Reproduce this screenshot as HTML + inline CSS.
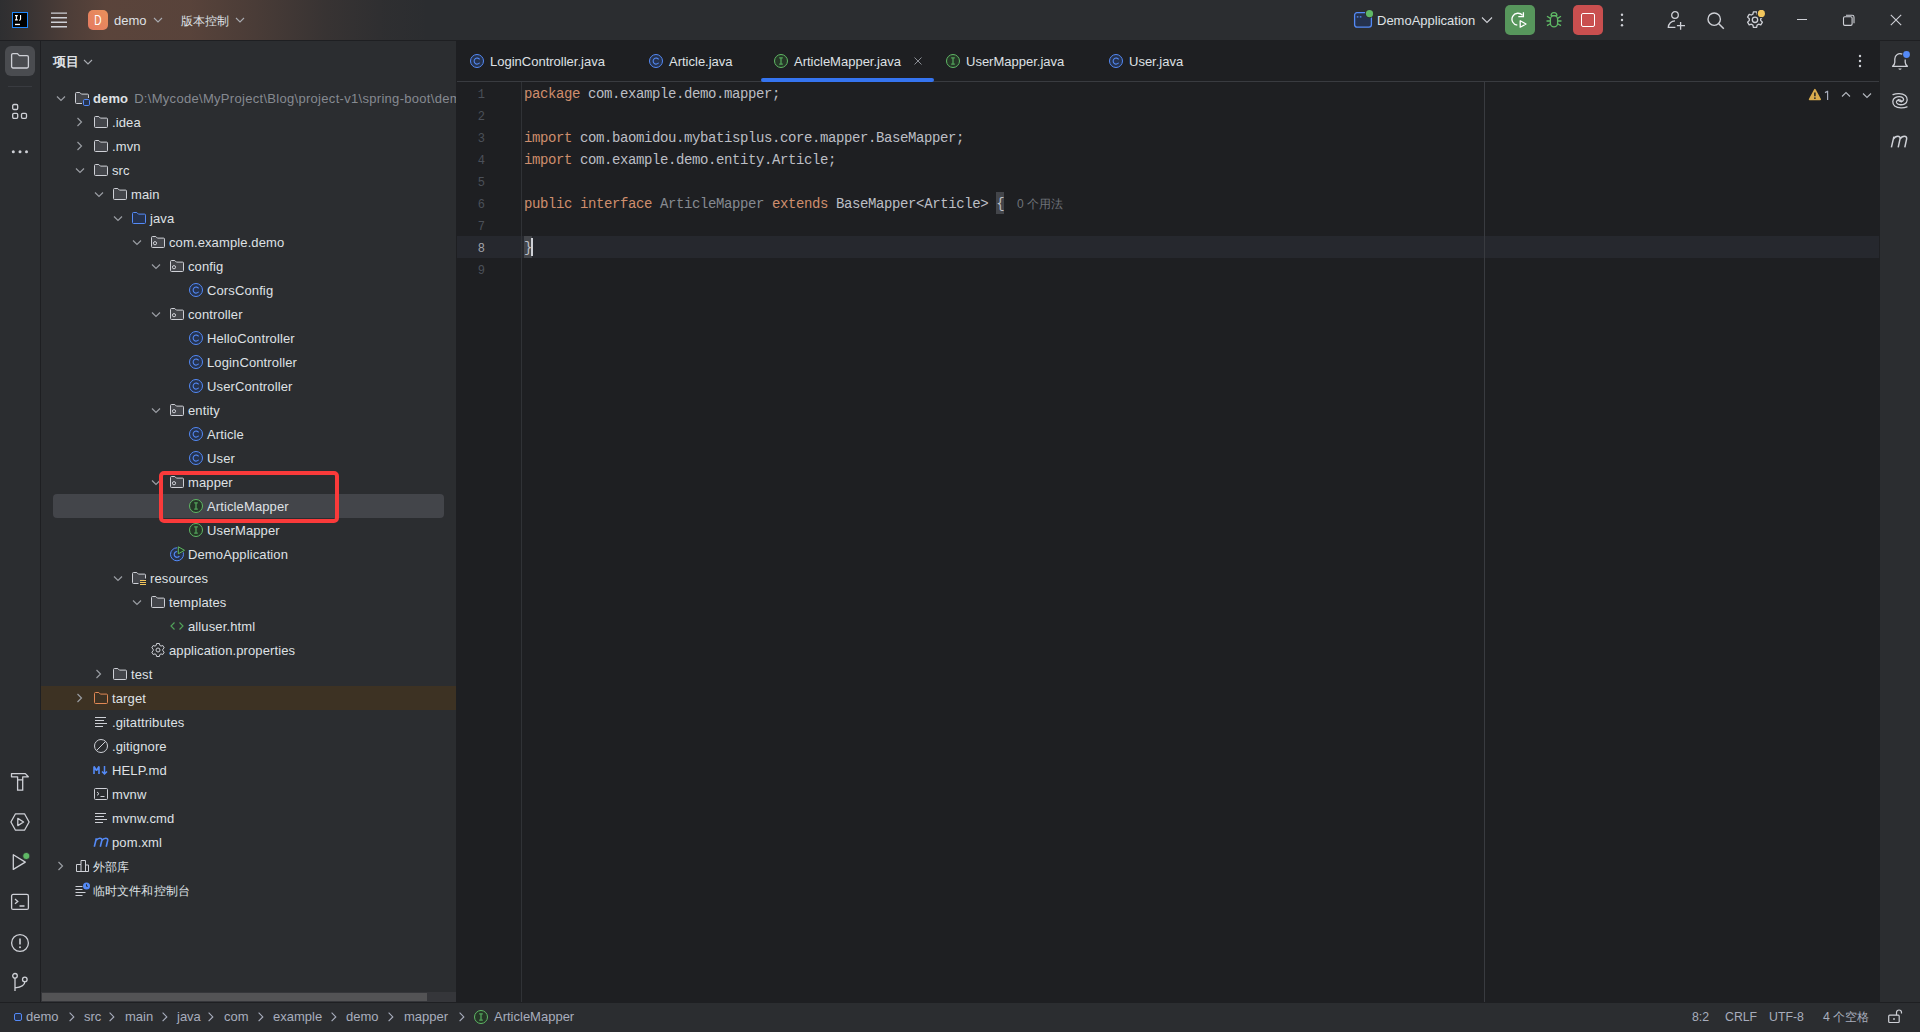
<!DOCTYPE html>
<html><head><meta charset="utf-8">
<style>
*{box-sizing:border-box;margin:0;padding:0}
html,body{width:1920px;height:1032px;overflow:hidden;background:#2B2D30;font-family:"Liberation Sans",sans-serif;font-size:13px;color:#DFE1E5}
.abs{position:absolute}
.ic{position:absolute;width:16px;height:16px}
.ic svg{display:block}
#top{position:absolute;left:0;top:0;width:1920px;height:41px;background:#2B2D30;border-bottom:1px solid #1E1F22;overflow:hidden}
#topgrad{position:absolute;left:0;top:0;width:520px;height:41px;background:linear-gradient(to right, rgba(206,124,86,0.02) 0px, rgba(206,124,86,0.09) 30px, rgba(206,124,86,0.2) 65px, rgba(206,124,86,0.29) 105px, rgba(206,124,86,0.28) 190px, rgba(206,124,86,0.19) 255px, rgba(206,124,86,0.08) 325px, rgba(206,124,86,0.02) 385px, rgba(206,124,86,0) 430px)}
#lstripe{position:absolute;left:0;top:41px;width:41px;height:961px;background:#2B2D30;border-right:1px solid #1E1F22}
#proj{position:absolute;left:41px;top:41px;width:415px;height:961px;background:#2B2D30;overflow:hidden}
#ed{position:absolute;left:456px;top:41px;width:1424px;height:961px;background:#1E1F22}
#rstripe{position:absolute;left:1879px;top:41px;width:41px;height:961px;background:#2B2D30;border-left:1px solid #1E1F22}
#status{position:absolute;left:0;top:1002px;width:1920px;height:30px;background:#2B2D30;border-top:1px solid #1E1F22}
.t{position:absolute;height:24px;line-height:24px;white-space:nowrap;font-size:13px;color:#DFE1E5;letter-spacing:0.12px}
.code{position:absolute;height:22px;line-height:22px;font-family:"Liberation Mono",monospace;font-size:14px;letter-spacing:-0.4px;color:#BCBEC4;white-space:pre}
.ln{position:absolute;left:455px;width:30px;height:22px;line-height:22px;text-align:right;font-family:"Liberation Mono",monospace;font-size:12px;color:#4B5059}
.ln.cur{color:#A1A3AB}
.tab{position:absolute;top:41px;height:40px;line-height:40px;white-space:nowrap;font-size:13px;color:#DFE1E5}
.brace{background:#43454A}
.tt{position:absolute;white-space:nowrap}
</style></head><body>
<div id="top"><div id="topgrad"></div></div>
<div id="lstripe"></div>
<div id="proj"></div>
<div id="ed"></div>
<div id="rstripe"></div>
<div id="status"></div>

<!-- project header -->
<div class="t" style="left:53px;top:50px;font-weight:bold;font-size:12.5px">项目</div>

<!-- tree selection / highlight -->
<div class="abs" style="left:41px;top:686px;width:415px;height:24px;background:#3D3223"></div>
<div class="abs" style="left:53px;top:494px;width:391px;height:24px;background:#43454A;border-radius:4px"></div>
<div class="abs" style="left:0;top:0;width:456px;height:990px;overflow:hidden">
<div class="ic" style="left:53px;top:90px"><svg width="16" height="16" viewBox="0 0 16 16"  fill="none"><path d="M4 6.5l4 4 4-4" stroke="#9A9DA3" stroke-width="1.2"/></svg></div>
<div class="ic" style="left:74px;top:90px"><svg width="16" height="16" viewBox="0 0 16 16"  fill="none"><path d="M14.5 8V5.1a1 1 0 0 0-1-1H7.4L5.8 2.5H2.5a1 1 0 0 0-1 1v9a1 1 0 0 0 1 1H8" fill="#43454A" stroke="#CED0D6"/><rect x="9.5" y="9.5" width="6" height="6" rx="1.2" fill="#25324D" stroke="#548AF7"/></svg></div>
<div class="t" style="left:93px;top:87px"><b style="font-weight:bold">demo</b><span style="color:#868A91;margin-left:6px;letter-spacing:0.3px">D:\Mycode\MyProject\Blog\project-v1\spring-boot\demo</span></div>
<div class="ic" style="left:71px;top:114px"><svg width="16" height="16" viewBox="0 0 16 16"  fill="none"><path d="M6.5 4l4 4-4 4" stroke="#9A9DA3" stroke-width="1.2"/></svg></div>
<div class="ic" style="left:93px;top:114px"><svg width="16" height="16" viewBox="0 0 16 16"  fill="none"><path d="M1.5 3.5a1 1 0 0 1 1-1h3.3l1.6 1.6h6.1a1 1 0 0 1 1 1v7.4a1 1 0 0 1-1 1h-11a1 1 0 0 1-1-1z" fill="#43454A" stroke="#CED0D6"/></svg></div>
<div class="t" style="left:112px;top:111px">.idea</div>
<div class="ic" style="left:71px;top:138px"><svg width="16" height="16" viewBox="0 0 16 16"  fill="none"><path d="M6.5 4l4 4-4 4" stroke="#9A9DA3" stroke-width="1.2"/></svg></div>
<div class="ic" style="left:93px;top:138px"><svg width="16" height="16" viewBox="0 0 16 16"  fill="none"><path d="M1.5 3.5a1 1 0 0 1 1-1h3.3l1.6 1.6h6.1a1 1 0 0 1 1 1v7.4a1 1 0 0 1-1 1h-11a1 1 0 0 1-1-1z" fill="#43454A" stroke="#CED0D6"/></svg></div>
<div class="t" style="left:112px;top:135px">.mvn</div>
<div class="ic" style="left:72px;top:162px"><svg width="16" height="16" viewBox="0 0 16 16"  fill="none"><path d="M4 6.5l4 4 4-4" stroke="#9A9DA3" stroke-width="1.2"/></svg></div>
<div class="ic" style="left:93px;top:162px"><svg width="16" height="16" viewBox="0 0 16 16"  fill="none"><path d="M1.5 3.5a1 1 0 0 1 1-1h3.3l1.6 1.6h6.1a1 1 0 0 1 1 1v7.4a1 1 0 0 1-1 1h-11a1 1 0 0 1-1-1z" fill="#43454A" stroke="#CED0D6"/></svg></div>
<div class="t" style="left:112px;top:159px">src</div>
<div class="ic" style="left:91px;top:186px"><svg width="16" height="16" viewBox="0 0 16 16"  fill="none"><path d="M4 6.5l4 4 4-4" stroke="#9A9DA3" stroke-width="1.2"/></svg></div>
<div class="ic" style="left:112px;top:186px"><svg width="16" height="16" viewBox="0 0 16 16"  fill="none"><path d="M1.5 3.5a1 1 0 0 1 1-1h3.3l1.6 1.6h6.1a1 1 0 0 1 1 1v7.4a1 1 0 0 1-1 1h-11a1 1 0 0 1-1-1z" fill="#43454A" stroke="#CED0D6"/></svg></div>
<div class="t" style="left:131px;top:183px">main</div>
<div class="ic" style="left:110px;top:210px"><svg width="16" height="16" viewBox="0 0 16 16"  fill="none"><path d="M4 6.5l4 4 4-4" stroke="#9A9DA3" stroke-width="1.2"/></svg></div>
<div class="ic" style="left:131px;top:210px"><svg width="16" height="16" viewBox="0 0 16 16"  fill="none"><path d="M1.5 3.5a1 1 0 0 1 1-1h3.3l1.6 1.6h6.1a1 1 0 0 1 1 1v7.4a1 1 0 0 1-1 1h-11a1 1 0 0 1-1-1z" fill="#25324D" stroke="#548AF7"/></svg></div>
<div class="t" style="left:150px;top:207px">java</div>
<div class="ic" style="left:129px;top:234px"><svg width="16" height="16" viewBox="0 0 16 16"  fill="none"><path d="M4 6.5l4 4 4-4" stroke="#9A9DA3" stroke-width="1.2"/></svg></div>
<div class="ic" style="left:150px;top:234px"><svg width="16" height="16" viewBox="0 0 16 16"  fill="none"><path d="M1.5 3.5a1 1 0 0 1 1-1h3.3l1.6 1.6h6.1a1 1 0 0 1 1 1v7.4a1 1 0 0 1-1 1h-11a1 1 0 0 1-1-1z" fill="#43454A" stroke="#CED0D6"/><circle cx="5" cy="9.2" r="1.6" stroke="#CED0D6"/></svg></div>
<div class="t" style="left:169px;top:231px">com.example.demo</div>
<div class="ic" style="left:148px;top:258px"><svg width="16" height="16" viewBox="0 0 16 16"  fill="none"><path d="M4 6.5l4 4 4-4" stroke="#9A9DA3" stroke-width="1.2"/></svg></div>
<div class="ic" style="left:169px;top:258px"><svg width="16" height="16" viewBox="0 0 16 16"  fill="none"><path d="M1.5 3.5a1 1 0 0 1 1-1h3.3l1.6 1.6h6.1a1 1 0 0 1 1 1v7.4a1 1 0 0 1-1 1h-11a1 1 0 0 1-1-1z" fill="#43454A" stroke="#CED0D6"/><circle cx="5" cy="9.2" r="1.6" stroke="#CED0D6"/></svg></div>
<div class="t" style="left:188px;top:255px">config</div>
<div class="ic" style="left:188px;top:282px"><svg width="16" height="16" viewBox="0 0 16 16"  fill="none"><circle cx="8" cy="8" r="6.5" fill="#25324D" stroke="#548AF7"/><path d="M10.6 6.4A3 3 0 1 0 10.6 9.8" stroke="#548AF7" stroke-width="1.05"/></svg></div>
<div class="t" style="left:207px;top:279px">CorsConfig</div>
<div class="ic" style="left:148px;top:306px"><svg width="16" height="16" viewBox="0 0 16 16"  fill="none"><path d="M4 6.5l4 4 4-4" stroke="#9A9DA3" stroke-width="1.2"/></svg></div>
<div class="ic" style="left:169px;top:306px"><svg width="16" height="16" viewBox="0 0 16 16"  fill="none"><path d="M1.5 3.5a1 1 0 0 1 1-1h3.3l1.6 1.6h6.1a1 1 0 0 1 1 1v7.4a1 1 0 0 1-1 1h-11a1 1 0 0 1-1-1z" fill="#43454A" stroke="#CED0D6"/><circle cx="5" cy="9.2" r="1.6" stroke="#CED0D6"/></svg></div>
<div class="t" style="left:188px;top:303px">controller</div>
<div class="ic" style="left:188px;top:330px"><svg width="16" height="16" viewBox="0 0 16 16"  fill="none"><circle cx="8" cy="8" r="6.5" fill="#25324D" stroke="#548AF7"/><path d="M10.6 6.4A3 3 0 1 0 10.6 9.8" stroke="#548AF7" stroke-width="1.05"/></svg></div>
<div class="t" style="left:207px;top:327px">HelloController</div>
<div class="ic" style="left:188px;top:354px"><svg width="16" height="16" viewBox="0 0 16 16"  fill="none"><circle cx="8" cy="8" r="6.5" fill="#25324D" stroke="#548AF7"/><path d="M10.6 6.4A3 3 0 1 0 10.6 9.8" stroke="#548AF7" stroke-width="1.05"/></svg></div>
<div class="t" style="left:207px;top:351px">LoginController</div>
<div class="ic" style="left:188px;top:378px"><svg width="16" height="16" viewBox="0 0 16 16"  fill="none"><circle cx="8" cy="8" r="6.5" fill="#25324D" stroke="#548AF7"/><path d="M10.6 6.4A3 3 0 1 0 10.6 9.8" stroke="#548AF7" stroke-width="1.05"/></svg></div>
<div class="t" style="left:207px;top:375px">UserController</div>
<div class="ic" style="left:148px;top:402px"><svg width="16" height="16" viewBox="0 0 16 16"  fill="none"><path d="M4 6.5l4 4 4-4" stroke="#9A9DA3" stroke-width="1.2"/></svg></div>
<div class="ic" style="left:169px;top:402px"><svg width="16" height="16" viewBox="0 0 16 16"  fill="none"><path d="M1.5 3.5a1 1 0 0 1 1-1h3.3l1.6 1.6h6.1a1 1 0 0 1 1 1v7.4a1 1 0 0 1-1 1h-11a1 1 0 0 1-1-1z" fill="#43454A" stroke="#CED0D6"/><circle cx="5" cy="9.2" r="1.6" stroke="#CED0D6"/></svg></div>
<div class="t" style="left:188px;top:399px">entity</div>
<div class="ic" style="left:188px;top:426px"><svg width="16" height="16" viewBox="0 0 16 16"  fill="none"><circle cx="8" cy="8" r="6.5" fill="#25324D" stroke="#548AF7"/><path d="M10.6 6.4A3 3 0 1 0 10.6 9.8" stroke="#548AF7" stroke-width="1.05"/></svg></div>
<div class="t" style="left:207px;top:423px">Article</div>
<div class="ic" style="left:188px;top:450px"><svg width="16" height="16" viewBox="0 0 16 16"  fill="none"><circle cx="8" cy="8" r="6.5" fill="#25324D" stroke="#548AF7"/><path d="M10.6 6.4A3 3 0 1 0 10.6 9.8" stroke="#548AF7" stroke-width="1.05"/></svg></div>
<div class="t" style="left:207px;top:447px">User</div>
<div class="ic" style="left:148px;top:474px"><svg width="16" height="16" viewBox="0 0 16 16"  fill="none"><path d="M4 6.5l4 4 4-4" stroke="#9A9DA3" stroke-width="1.2"/></svg></div>
<div class="ic" style="left:169px;top:474px"><svg width="16" height="16" viewBox="0 0 16 16"  fill="none"><path d="M1.5 3.5a1 1 0 0 1 1-1h3.3l1.6 1.6h6.1a1 1 0 0 1 1 1v7.4a1 1 0 0 1-1 1h-11a1 1 0 0 1-1-1z" fill="#43454A" stroke="#CED0D6"/><circle cx="5" cy="9.2" r="1.6" stroke="#CED0D6"/></svg></div>
<div class="t" style="left:188px;top:471px">mapper</div>
<div class="ic" style="left:188px;top:498px"><svg width="16" height="16" viewBox="0 0 16 16"  fill="none"><circle cx="8" cy="8" r="6.5" fill="#253627" stroke="#5FB865"/><path d="M6.2 4.9h3.6M6.2 11.1h3.6M8 4.9v6.2" stroke="#52A35A" stroke-width="1.3"/></svg></div>
<div class="t" style="left:207px;top:495px">ArticleMapper</div>
<div class="ic" style="left:188px;top:522px"><svg width="16" height="16" viewBox="0 0 16 16"  fill="none"><circle cx="8" cy="8" r="6.5" fill="#253627" stroke="#5FB865"/><path d="M6.2 4.9h3.6M6.2 11.1h3.6M8 4.9v6.2" stroke="#52A35A" stroke-width="1.3"/></svg></div>
<div class="t" style="left:207px;top:519px">UserMapper</div>
<div class="ic" style="left:169px;top:546px"><svg width="16" height="16" viewBox="0 0 16 16"  fill="none"><circle cx="8" cy="8.3" r="6.5" fill="#25324D" stroke="#548AF7"/><path d="M10.4 6.6A2.9 2.9 0 1 0 10.4 10.2" stroke="#548AF7" stroke-width="1.15"/><path d="M9.3 0.8l6.2 3.5-6.2 3.5z" fill="#253627" stroke="#2B2D30" stroke-width="2.2" stroke-linejoin="round"/><path d="M9.3 0.8l6.2 3.5-6.2 3.5z" fill="#253627" stroke="#5FB865" stroke-linejoin="round"/></svg></div>
<div class="t" style="left:188px;top:543px">DemoApplication</div>
<div class="ic" style="left:110px;top:570px"><svg width="16" height="16" viewBox="0 0 16 16"  fill="none"><path d="M4 6.5l4 4 4-4" stroke="#9A9DA3" stroke-width="1.2"/></svg></div>
<div class="ic" style="left:131px;top:570px"><svg width="16" height="16" viewBox="0 0 16 16"  fill="none"><path d="M14.5 8.5V5.1a1 1 0 0 0-1-1H7.4L5.8 2.5H2.5a1 1 0 0 0-1 1v9a1 1 0 0 0 1 1H7.5" fill="#43454A" stroke="#CED0D6"/><path d="M9 10.5h6M9 12.5h6M9 14.5h6" stroke="#F2C55C"/></svg></div>
<div class="t" style="left:150px;top:567px">resources</div>
<div class="ic" style="left:129px;top:594px"><svg width="16" height="16" viewBox="0 0 16 16"  fill="none"><path d="M4 6.5l4 4 4-4" stroke="#9A9DA3" stroke-width="1.2"/></svg></div>
<div class="ic" style="left:150px;top:594px"><svg width="16" height="16" viewBox="0 0 16 16"  fill="none"><path d="M1.5 3.5a1 1 0 0 1 1-1h3.3l1.6 1.6h6.1a1 1 0 0 1 1 1v7.4a1 1 0 0 1-1 1h-11a1 1 0 0 1-1-1z" fill="#43454A" stroke="#CED0D6"/></svg></div>
<div class="t" style="left:169px;top:591px">templates</div>
<div class="ic" style="left:169px;top:618px"><svg width="16" height="16" viewBox="0 0 16 16"  fill="none"><path d="M5.5 4.5L2 8l3.5 3.5M10.5 4.5L14 8l-3.5 3.5" stroke="#52A35A" stroke-width="1.15"/></svg></div>
<div class="t" style="left:188px;top:615px">alluser.html</div>
<div class="ic" style="left:150px;top:642px"><svg width="16" height="16" viewBox="0 0 16 16"  fill="none"><path d="M6.6 1.5h2.8l.4 1.9 1.2.7 1.8-.6 1.4 2.4-1.4 1.3v1.6l1.4 1.3-1.4 2.4-1.8-.6-1.2.7-.4 1.9H6.6l-.4-1.9-1.2-.7-1.8.6-1.4-2.4 1.4-1.3V7.2L1.8 5.9l1.4-2.4 1.8.6 1.2-.7z" stroke="#CED0D6" stroke-linejoin="round"/><circle cx="8" cy="8" r="2" stroke="#CED0D6"/></svg></div>
<div class="t" style="left:169px;top:639px">application.properties</div>
<div class="ic" style="left:90px;top:666px"><svg width="16" height="16" viewBox="0 0 16 16"  fill="none"><path d="M6.5 4l4 4-4 4" stroke="#9A9DA3" stroke-width="1.2"/></svg></div>
<div class="ic" style="left:112px;top:666px"><svg width="16" height="16" viewBox="0 0 16 16"  fill="none"><path d="M1.5 3.5a1 1 0 0 1 1-1h3.3l1.6 1.6h6.1a1 1 0 0 1 1 1v7.4a1 1 0 0 1-1 1h-11a1 1 0 0 1-1-1z" fill="#43454A" stroke="#CED0D6"/></svg></div>
<div class="t" style="left:131px;top:663px">test</div>
<div class="ic" style="left:71px;top:690px"><svg width="16" height="16" viewBox="0 0 16 16"  fill="none"><path d="M6.5 4l4 4-4 4" stroke="#9A9DA3" stroke-width="1.2"/></svg></div>
<div class="ic" style="left:93px;top:690px"><svg width="16" height="16" viewBox="0 0 16 16"  fill="none"><path d="M1.5 3.5a1 1 0 0 1 1-1h3.3l1.6 1.6h6.1a1 1 0 0 1 1 1v7.4a1 1 0 0 1-1 1h-11a1 1 0 0 1-1-1z" fill="#3D3223" stroke="#E08855"/></svg></div>
<div class="t" style="left:112px;top:687px">target</div>
<div class="ic" style="left:93px;top:714px"><svg width="16" height="16" viewBox="0 0 16 16"  fill="none"><path d="M2 3.5h11M2 6.5h9M2 9.5h12M2 12.5h8" stroke="#CED0D6"/></svg></div>
<div class="t" style="left:112px;top:711px">.gitattributes</div>
<div class="ic" style="left:93px;top:738px"><svg width="16" height="16" viewBox="0 0 16 16"  fill="none"><circle cx="8" cy="8" r="6.5" stroke="#CED0D6"/><path d="M3.5 12.5l9-9" stroke="#CED0D6"/></svg></div>
<div class="t" style="left:112px;top:735px">.gitignore</div>
<div class="ic" style="left:93px;top:762px"><svg width="16" height="16" viewBox="0 0 16 16"  fill="none"><path d="M1 12V4.5l2.5 4 2.5-4V12" stroke="#548AF7" stroke-width="1.6" stroke-linejoin="bevel"/><path d="M11.5 4v8M9 9.5l2.5 2.5 2.5-2.5" stroke="#548AF7" stroke-width="1.5"/></svg></div>
<div class="t" style="left:112px;top:759px">HELP.md</div>
<div class="ic" style="left:93px;top:786px"><svg width="16" height="16" viewBox="0 0 16 16"  fill="none"><rect x="1.5" y="2.5" width="13" height="11" rx="1" stroke="#CED0D6"/><path d="M4 6l2 1.7L4 9.4M7.5 10.5h4" stroke="#CED0D6"/></svg></div>
<div class="t" style="left:112px;top:783px">mvnw</div>
<div class="ic" style="left:93px;top:810px"><svg width="16" height="16" viewBox="0 0 16 16"  fill="none"><path d="M2 3.5h11M2 6.5h9M2 9.5h12M2 12.5h8" stroke="#CED0D6"/></svg></div>
<div class="t" style="left:112px;top:807px">mvnw.cmd</div>
<div class="ic" style="left:93px;top:834px"><svg width="16" height="16" viewBox="0 0 16 16"  fill="none"><path d="M1.3 12.8L3.4 4.2M3 6.4c1.1-1.5 2.4-2.2 3.8-2.2 1.5 0 2.3.9 2 2.3L7.3 12.8M8.8 6.5c1.1-1.6 2.5-2.3 3.9-2.3 1.5 0 2.3.9 2 2.3l-1.5 6.3" stroke="#548AF7" stroke-width="1.6" fill="none" stroke-linejoin="round"/></svg></div>
<div class="t" style="left:112px;top:831px">pom.xml</div>
<div class="ic" style="left:52px;top:858px"><svg width="16" height="16" viewBox="0 0 16 16"  fill="none"><path d="M6.5 4l4 4-4 4" stroke="#9A9DA3" stroke-width="1.2"/></svg></div>
<div class="ic" style="left:74px;top:858px"><svg width="16" height="16" viewBox="0 0 16 16"  fill="none"><path d="M2.5 13.5V6.5h4.5v-4h4.5v4.5h3v6.5z M7 6.5v7 M11.5 7v6.5" stroke="#CED0D6" stroke-linejoin="round"/></svg></div>
<div class="t" style="left:93px;top:855px"><span style="font-size:12px">外部库</span></div>
<div class="ic" style="left:74px;top:882px"><svg width="16" height="16" viewBox="0 0 16 16"  fill="none"><path d="M1.5 4.5h7M1.5 7.5h7M1.5 10.5h10M1.5 13.5h7" stroke="#CED0D6"/><circle cx="12.5" cy="4" r="3.5" fill="#548AF7"/><path d="M12.5 2.3v2h1.3" stroke="#2B2D30" stroke-width="1"/></svg></div>
<div class="t" style="left:93px;top:879px"><span style="font-size:12px">临时文件和控制台</span></div>
</div>
<div class="abs" style="left:159px;top:471px;width:180px;height:52px;border:4px solid #FA3A3A;border-radius:5px"></div>

<!-- editor -->
<div class="abs" style="left:457px;top:81px;width:1422px;height:1px;background:#393B40"></div>
<div class="abs" style="left:457px;top:236px;width:1422px;height:22px;background:#26282E"></div>
<div class="abs" style="left:521px;top:82px;width:1px;height:920px;background:#303236"></div>
<div class="abs" style="left:1484px;top:82px;width:1px;height:920px;background:#393B40"></div>



<!-- ===== TOP BAR ===== -->
<svg class="abs" style="left:12px;top:12px" width="16" height="16" viewBox="0 0 16 16"><rect x="0.5" y="0.5" width="15" height="15" fill="#000" stroke="#1E88FF"/><path d="M3 3.6h2.8M4.4 3.6v4.3M3 7.9h2.8M8.55 3v4.1a1.1 1.1 0 0 1-1.1 1.1h-.4" stroke="#fff" stroke-width="1.1" fill="none"/><rect x="3" y="11.8" width="5" height="1.3" fill="#fff"/></svg>
<svg class="abs" style="left:51px;top:11px" width="16" height="18" viewBox="0 0 16 18"><path d="M0 2.1h16M0 6.8h16M0 11.2h16M0 15.75h16" stroke="#CED0D6" stroke-width="1.4"/></svg>
<div class="abs" style="left:88px;top:10px;width:20px;height:20px;border-radius:5px;background:linear-gradient(45deg,#E57A62,#E8915A)"></div>
<div class="tt" style="left:88px;top:10px;width:20px;height:20px;line-height:20px;text-align:center;color:#fff;font-size:14px;transform:scaleX(0.72)">D</div>
<div class="tt" style="left:114px;top:11px;line-height:20px;font-size:13px;color:#DFE1E5">demo</div>
<svg class="abs" style="left:153px;top:16px" width="10" height="8" viewBox="0 0 10 8"><path d="M1 2l4 4 4-4" stroke="#A9ACB2" stroke-width="1.1" fill="none"/></svg>
<div class="tt" style="left:181px;top:11px;line-height:20px;font-size:12px;color:#DFE1E5">版本控制</div>
<svg class="abs" style="left:235px;top:16px" width="10" height="8" viewBox="0 0 10 8"><path d="M1 2l4 4 4-4" stroke="#A9ACB2" stroke-width="1.1" fill="none"/></svg>

<svg class="abs" style="left:1353px;top:9px" width="20" height="20" viewBox="0 0 20 20"><rect x="1.6" y="3.7" width="16.8" height="14.5" rx="2.4" fill="#25324D" stroke="#548AF7" stroke-width="1.3"/><path d="M3.8 7.8h1.6M6.8 7.8h1.6" stroke="#548AF7" stroke-width="1.2"/><circle cx="16.5" cy="4.6" r="4.6" fill="#2B2D30"/><circle cx="16.5" cy="4.6" r="3.6" fill="#5FB865"/></svg>
<div class="tt" style="left:1377px;top:11px;line-height:20px;font-size:13px;color:#DFE1E5">DemoApplication</div>
<svg class="abs" style="left:1481px;top:16px" width="12" height="8" viewBox="0 0 12 8"><path d="M1 1.5l5 5 5-5" stroke="#CED0D6" stroke-width="1.1" fill="none"/></svg>
<div class="abs" style="left:1505px;top:5px;width:30px;height:30px;border-radius:5px;background:#57965C"></div>
<svg class="abs" style="left:1511px;top:11px" width="18" height="18" viewBox="0 0 18 18"><path d="M6.3 14.2A6 6 0 1 1 11.6 4.4" stroke="#fff" stroke-width="1.3" fill="none"/><path d="M7.3 5.6h5.1V1.2" stroke="#fff" stroke-width="1.3" fill="none"/><path d="M9.2 9.8v6.4l5.8-3.2z" stroke="#fff" stroke-width="1.3" fill="none" stroke-linejoin="round"/></svg>
<svg class="abs" style="left:1545px;top:11px" width="18" height="18" viewBox="0 0 18 18"><path d="M6.1 4.6a2.9 2.9 0 0 1 5.8 0z" stroke="#5FB865" stroke-width="1.3" fill="none" stroke-linejoin="round"/><rect x="5.4" y="4.6" width="7.2" height="11.2" rx="3.6" stroke="#5FB865" stroke-width="1.3" fill="none"/><path d="M5.4 7.4L2 5.3M12.6 7.4L16 5.3M1.5 10h3.9M12.6 10h3.9M5.4 12.8L2 14.6M12.6 12.8L16 14.6" stroke="#5FB865" stroke-width="1.3"/></svg>
<div class="abs" style="left:1573px;top:5px;width:30px;height:30px;border-radius:5px;background:#C94F4F"></div>
<div class="abs" style="left:1581px;top:13px;width:14px;height:14px;border:1.4px solid #fff;border-radius:2px"></div>
<svg class="abs" style="left:1618px;top:12px" width="8" height="16" viewBox="0 0 8 16"><circle cx="4" cy="2.8" r="1.2" fill="#CED0D6"/><circle cx="4" cy="8" r="1.2" fill="#CED0D6"/><circle cx="4" cy="13.3" r="1.2" fill="#CED0D6"/></svg>

<svg class="abs" style="left:1666px;top:10px" width="20" height="20" viewBox="0 0 20 20"><circle cx="9" cy="5" r="3.3" stroke="#CED0D6" stroke-width="1.3" fill="none"/><path d="M9.4 17.3H2.3c.2-3.6 3-6.5 6.7-6.5" stroke="#CED0D6" stroke-width="1.3" fill="none"/><path d="M14.6 11.9v7.8M10.9 15.6H19" stroke="#CED0D6" stroke-width="1.3"/></svg>
<svg class="abs" style="left:1706px;top:11px" width="20" height="20" viewBox="0 0 20 20"><circle cx="8.2" cy="8.2" r="6.2" stroke="#CED0D6" stroke-width="1.4" fill="none"/><path d="M12.8 12.8l5 5" stroke="#CED0D6" stroke-width="1.5"/></svg>
<svg class="abs" style="left:1745px;top:10px" width="20" height="20" viewBox="0 0 20 20"><path d="M8.4 1.8h3.2l.5 2.3 1.5.9 2.2-.7 1.6 2.8-1.7 1.6v1.8l1.7 1.6-1.6 2.8-2.2-.7-1.5.9-.5 2.3H8.4l-.5-2.3-1.5-.9-2.2.7-1.6-2.8 1.7-1.6V8.7L2.6 7.1l1.6-2.8 2.2.7 1.5-.9z" stroke="#CED0D6" stroke-width="1.3" fill="none" stroke-linejoin="round"/><circle cx="10" cy="9.8" r="2.7" stroke="#CED0D6" stroke-width="1.3" fill="none"/><circle cx="16.4" cy="3.4" r="4.6" fill="#2B2D30"/><circle cx="16.4" cy="3.4" r="3.6" fill="#F2C55C"/></svg>
<div class="abs" style="left:1797px;top:19px;width:10px;height:1.2px;background:#CED0D6"></div>
<svg class="abs" style="left:1842px;top:13px" width="14" height="14" viewBox="0 0 14 14"><rect x="1.5" y="3.8" width="8.6" height="8.6" rx="1.3" stroke="#CED0D6" stroke-width="1.1" fill="none"/><path d="M4 2.2h6.2a1.8 1.8 0 0 1 1.8 1.8v6.2" stroke="#CED0D6" stroke-width="1.1" fill="none"/></svg>
<svg class="abs" style="left:1889px;top:13px" width="14" height="14" viewBox="0 0 14 14"><path d="M1.8 1.8l10.4 10.4M12.2 1.8L1.8 12.2" stroke="#CED0D6" stroke-width="1.1"/></svg>

<!-- ===== LEFT STRIPE ===== -->
<div class="abs" style="left:5px;top:46px;width:30px;height:30px;border-radius:6px;background:#4A4C50"></div>
<svg class="abs" style="left:10px;top:52px" width="20" height="18" viewBox="0 0 20 18"><path d="M1.6 3a1.4 1.4 0 0 1 1.4-1.4h4.4l2 2H17a1.4 1.4 0 0 1 1.4 1.4v9.6A1.4 1.4 0 0 1 17 16H3a1.4 1.4 0 0 1-1.4-1.4z" stroke="#CED0D6" stroke-width="1.3" fill="#4A4C50"/><path d="M1.6 6.2h16.8" stroke="#CED0D6" stroke-width="0" /></svg>
<div class="abs" style="left:8px;top:86px;width:24px;height:1px;background:#393B40"></div>
<svg class="abs" style="left:11px;top:103px" width="18" height="18" viewBox="0 0 18 18"><rect x="1.7" y="1.5" width="5" height="5" rx="1.2" stroke="#CED0D6" stroke-width="1.3" fill="none"/><rect x="1.7" y="10.3" width="5" height="5" rx="1.2" stroke="#CED0D6" stroke-width="1.3" fill="none"/><rect x="10.5" y="10.3" width="5" height="5" rx="1.2" stroke="#CED0D6" stroke-width="1.3" fill="none"/></svg>
<svg class="abs" style="left:10px;top:147px" width="20" height="10" viewBox="0 0 20 10"><circle cx="3.3" cy="4.8" r="1.5" fill="#CED0D6"/><circle cx="10" cy="4.8" r="1.5" fill="#CED0D6"/><circle cx="16.5" cy="4.8" r="1.5" fill="#CED0D6"/></svg>

<svg class="abs" style="left:10px;top:772px" width="20" height="20" viewBox="0 0 20 20"><path d="M1.5 1.6h13.8l3 3.2H12.7v3H7.6V4.8H1.5z" stroke="#CED0D6" stroke-width="1.3" fill="none" stroke-linejoin="round"/><path d="M7.6 7.8v10.4h5.1V7.8" stroke="#CED0D6" stroke-width="1.3" fill="none"/></svg>
<svg class="abs" style="left:10px;top:812px" width="20" height="20" viewBox="0 0 20 20"><path d="M5.5 1.8h9l4.6 8.2-4.6 8.2h-9L.9 10z" stroke="#CED0D6" stroke-width="1.3" fill="none" stroke-linejoin="round"/><path d="M7.8 6.4v7.2l5.8-3.6z" stroke="#CED0D6" stroke-width="1.3" fill="none" stroke-linejoin="round"/></svg>
<svg class="abs" style="left:10px;top:852px" width="20" height="20" viewBox="0 0 20 20"><path d="M3.3 2.8v14.6l12-7.3z" stroke="#CED0D6" stroke-width="1.3" fill="none" stroke-linejoin="round"/><circle cx="16.3" cy="4" r="3.6" fill="#5FB865" stroke="#2B2D30" stroke-width="0.8"/></svg>
<svg class="abs" style="left:10px;top:892px" width="20" height="20" viewBox="0 0 20 20"><rect x="1.6" y="2.4" width="16.8" height="15" rx="1.5" stroke="#CED0D6" stroke-width="1.3" fill="none"/><path d="M5 7l2.8 2.4L5 11.8M9.5 14h5" stroke="#CED0D6" stroke-width="1.3" fill="none"/></svg>
<svg class="abs" style="left:10px;top:933px" width="20" height="20" viewBox="0 0 20 20"><circle cx="10" cy="10" r="8.4" stroke="#CED0D6" stroke-width="1.3" fill="none"/><path d="M10 5.5v6" stroke="#CED0D6" stroke-width="1.6"/><circle cx="10" cy="14.2" r="1" fill="#CED0D6"/></svg>
<svg class="abs" style="left:10px;top:972px" width="20" height="20" viewBox="0 0 20 20"><circle cx="5" cy="3.8" r="2.3" stroke="#CED0D6" stroke-width="1.3" fill="none"/><circle cx="14.8" cy="7.4" r="2.3" stroke="#CED0D6" stroke-width="1.3" fill="none"/><path d="M5 6.1v13M14.8 9.7c0 3.5-3 5.4-9.8 6.2" stroke="#CED0D6" stroke-width="1.3" fill="none"/></svg>

<!-- project header -->
<svg class="abs" style="left:83px;top:58px" width="10" height="8" viewBox="0 0 10 8"><path d="M1 2l4 4 4-4" stroke="#A9ACB2" stroke-width="1.1" fill="none"/></svg>
<!-- project scrollbar -->
<div class="abs" style="left:41px;top:992px;width:415px;height:10px;background:#35363A"></div>
<div class="abs" style="left:42px;top:993px;width:385px;height:8px;background:#535355"></div>

<!-- ===== TABS ===== -->
<div class="ic" style="left:469px;top:53px"><svg width="16" height="16" viewBox="0 0 16 16"  fill="none"><circle cx="8" cy="8" r="6.5" fill="#25324D" stroke="#548AF7"/><path d="M10.6 6.4A3 3 0 1 0 10.6 9.8" stroke="#548AF7" stroke-width="1.05"/></svg></div>
<div class="tt" style="left:490px;top:52px;line-height:20px;font-size:13px;color:#DFE1E5">LoginController.java</div>
<div class="ic" style="left:648px;top:53px"><svg width="16" height="16" viewBox="0 0 16 16"  fill="none"><circle cx="8" cy="8" r="6.5" fill="#25324D" stroke="#548AF7"/><path d="M10.6 6.4A3 3 0 1 0 10.6 9.8" stroke="#548AF7" stroke-width="1.05"/></svg></div>
<div class="tt" style="left:669px;top:52px;line-height:20px;font-size:13px;color:#DFE1E5">Article.java</div>
<div class="ic" style="left:773px;top:53px"><svg width="16" height="16" viewBox="0 0 16 16"  fill="none"><circle cx="8" cy="8" r="6.5" fill="#253627" stroke="#5FB865"/><path d="M6.2 4.9h3.6M6.2 11.1h3.6M8 4.9v6.2" stroke="#52A35A" stroke-width="1.3"/></svg></div>
<div class="tt" style="left:794px;top:52px;line-height:20px;font-size:13px;color:#DFE1E5">ArticleMapper.java</div>
<div class="ic" style="left:945px;top:53px"><svg width="16" height="16" viewBox="0 0 16 16"  fill="none"><circle cx="8" cy="8" r="6.5" fill="#253627" stroke="#5FB865"/><path d="M6.2 4.9h3.6M6.2 11.1h3.6M8 4.9v6.2" stroke="#52A35A" stroke-width="1.3"/></svg></div>
<div class="tt" style="left:966px;top:52px;line-height:20px;font-size:13px;color:#DFE1E5">UserMapper.java</div>
<div class="ic" style="left:1108px;top:53px"><svg width="16" height="16" viewBox="0 0 16 16"  fill="none"><circle cx="8" cy="8" r="6.5" fill="#25324D" stroke="#548AF7"/><path d="M10.6 6.4A3 3 0 1 0 10.6 9.8" stroke="#548AF7" stroke-width="1.05"/></svg></div>
<div class="tt" style="left:1129px;top:52px;line-height:20px;font-size:13px;color:#DFE1E5">User.java</div>
<div class="abs" style="left:761px;top:78px;width:173px;height:4px;border-radius:2px;background:#3574F0"></div>
<svg class="abs" style="left:912px;top:55px" width="12" height="12" viewBox="0 0 12 12"><path d="M2.5 2.5l7 7M9.5 2.5l-7 7" stroke="#8C8F96" stroke-width="1"/></svg>
<svg class="abs" style="left:1856px;top:53px" width="8" height="16" viewBox="0 0 8 16"><circle cx="4" cy="3" r="1.2" fill="#CED0D6"/><circle cx="4" cy="8" r="1.2" fill="#CED0D6"/><circle cx="4" cy="13" r="1.2" fill="#CED0D6"/></svg>

<!-- ===== EDITOR EXTRA ===== -->
<div class="tt" style="left:1017px;top:193px;line-height:22px;font-size:12px;color:#6F737A">0 个用法</div>
<div class="abs" style="left:996px;top:192px;width:8px;height:22px;background:#43454A"></div>
<div class="abs" style="left:524px;top:236px;width:8px;height:22px;background:#43454A"></div>
<div class="ln" style="top:84px">1</div>
<div class="code" style="left:524px;top:83px"><span style="color:#CF8E6D">package</span> com.example.demo.mapper;</div>
<div class="ln" style="top:106px">2</div>
<div class="ln" style="top:128px">3</div>
<div class="code" style="left:524px;top:127px"><span style="color:#CF8E6D">import</span> com.baomidou.mybatisplus.core.mapper.BaseMapper;</div>
<div class="ln" style="top:150px">4</div>
<div class="code" style="left:524px;top:149px"><span style="color:#CF8E6D">import</span> com.example.demo.entity.Article;</div>
<div class="ln" style="top:172px">5</div>
<div class="ln" style="top:194px">6</div>
<div class="code" style="left:524px;top:193px"><span style="color:#CF8E6D">public interface</span> <span style="color:#868A91">ArticleMapper</span> <span style="color:#CF8E6D">extends</span> BaseMapper&lt;Article&gt; {</div>
<div class="ln" style="top:216px">7</div>
<div class="ln cur" style="top:238px">8</div>
<div class="code" style="left:524px;top:237px">}</div>
<div class="ln" style="top:260px">9</div>
<div class="abs" style="left:531px;top:238px;width:2px;height:18px;background:#CED0D6"></div>
<svg class="abs" style="left:1807px;top:87px" width="16" height="16" viewBox="0 0 16 16"><path d="M7.9 2.6L13.2 12.4H2.6z" fill="#D9AC4E" stroke="#D9AC4E" stroke-linejoin="round" stroke-width="1.6"/><path d="M7.9 5.6v3.6" stroke="#1E1F22" stroke-width="1.5"/><rect x="7.15" y="10.4" width="1.5" height="1.5" fill="#1E1F22"/></svg>
<svg class="abs" style="left:1822px;top:90px" width="10" height="11" viewBox="0 0 10 11"><path d="M5.6 0.8v9.2M5.6 1.2L3 2.6" stroke="#A8ADBD" stroke-width="1.2" fill="none"/></svg>
<svg class="abs" style="left:1841px;top:91px" width="10" height="8" viewBox="0 0 10 8"><path d="M1 5.5l4-4 4 4" stroke="#B4B8BF" stroke-width="1.1" fill="none"/></svg>
<svg class="abs" style="left:1862px;top:91px" width="10" height="8" viewBox="0 0 10 8"><path d="M1 2.5l4 4 4-4" stroke="#B4B8BF" stroke-width="1.1" fill="none"/></svg>

<!-- ===== RIGHT STRIPE ===== -->
<svg class="abs" style="left:1890px;top:51px" width="20" height="20" viewBox="0 0 20 20"><path d="M12.3 3.2A5.2 5.2 0 0 0 4.8 8v3.2c0 1.6-.8 2.8-2.2 4.1h14.8c-1.4-1.3-2.2-2.5-2.2-4.1V8.6" stroke="#CED0D6" stroke-width="1.3" fill="none" stroke-linejoin="round"/><path d="M8.3 17.6a1.8 1.8 0 0 0 3.4 0z" fill="#CED0D6"/><circle cx="16.5" cy="3.5" r="3.4" fill="#548AF7"/></svg>
<svg class="abs" style="left:1890px;top:91px" width="20" height="20" viewBox="0 0 20 20"><path d="M3 3.6C6 2.3 12 1.9 15.3 4.5C18.1 6.9 17.7 11.3 14.8 12.8C12.4 14.1 8.2 14.3 6.7 12C5.7 10.1 7.6 8.7 9.5 8.9C10.9 9.1 11.8 10 11.5 10.8" stroke="#CED0D6" stroke-width="1.3" fill="none" stroke-linecap="round"/><path d="M17 15.8C14 17.1 8 17.5 4.7 14.9C1.9 12.5 2.3 8.1 5.2 6.6C7.6 5.3 11.8 5.1 13.3 7.4C14.3 9.3 12.4 10.7 10.5 10.5C9.1 10.3 8.2 9.4 8.5 8.6" stroke="#CED0D6" stroke-width="1.3" fill="none" stroke-linecap="round"/></svg>
<svg class="abs" style="left:1890px;top:132px" width="20" height="16" viewBox="0 0 20 16"><path d="M1.4 15.4L3.9 4.6M3.4 7.2C4.5 5.2 6.2 4.3 7.8 4.3c1.7 0 2.6 1.1 2.2 2.9L8.2 15.4M10 7.2c1.1-2 2.8-2.9 4.4-2.9 1.7 0 2.6 1.1 2.2 2.9l-1.8 8.2" stroke="#CED0D6" stroke-width="1.5" fill="none" stroke-linejoin="round"/></svg>

<!-- ===== STATUS BAR ===== -->
<div class="abs" style="left:14px;top:1013px;width:8px;height:8px;border:1.3px solid #548AF7;border-radius:2px;background:#25324D"></div>
<div class="tt" style="left:26px;top:1007px;line-height:20px;font-size:13px;color:#A8ADBD">demo</div>
<div class="tt" style="left:84px;top:1007px;line-height:20px;font-size:13px;color:#A8ADBD">src</div>
<div class="tt" style="left:125px;top:1007px;line-height:20px;font-size:13px;color:#A8ADBD">main</div>
<div class="tt" style="left:177px;top:1007px;line-height:20px;font-size:13px;color:#A8ADBD">java</div>
<div class="tt" style="left:224px;top:1007px;line-height:20px;font-size:13px;color:#A8ADBD">com</div>
<div class="tt" style="left:273px;top:1007px;line-height:20px;font-size:13px;color:#A8ADBD">example</div>
<div class="tt" style="left:346px;top:1007px;line-height:20px;font-size:13px;color:#A8ADBD">demo</div>
<div class="tt" style="left:404px;top:1007px;line-height:20px;font-size:13px;color:#A8ADBD">mapper</div>
<div class="tt" style="left:494px;top:1007px;line-height:20px;font-size:13px;color:#A8ADBD">ArticleMapper</div>
<svg class="abs" style="left:68px;top:1012px" width="8" height="10" viewBox="0 0 8 10"><path d="M1.6 0.7l4.2 4.2-4.2 4.2" stroke="#A8ADBD" stroke-width="1.15" fill="none"/></svg>
<svg class="abs" style="left:108px;top:1012px" width="8" height="10" viewBox="0 0 8 10"><path d="M1.6 0.7l4.2 4.2-4.2 4.2" stroke="#A8ADBD" stroke-width="1.15" fill="none"/></svg>
<svg class="abs" style="left:161px;top:1012px" width="8" height="10" viewBox="0 0 8 10"><path d="M1.6 0.7l4.2 4.2-4.2 4.2" stroke="#A8ADBD" stroke-width="1.15" fill="none"/></svg>
<svg class="abs" style="left:207px;top:1012px" width="8" height="10" viewBox="0 0 8 10"><path d="M1.6 0.7l4.2 4.2-4.2 4.2" stroke="#A8ADBD" stroke-width="1.15" fill="none"/></svg>
<svg class="abs" style="left:257px;top:1012px" width="8" height="10" viewBox="0 0 8 10"><path d="M1.6 0.7l4.2 4.2-4.2 4.2" stroke="#A8ADBD" stroke-width="1.15" fill="none"/></svg>
<svg class="abs" style="left:330px;top:1012px" width="8" height="10" viewBox="0 0 8 10"><path d="M1.6 0.7l4.2 4.2-4.2 4.2" stroke="#A8ADBD" stroke-width="1.15" fill="none"/></svg>
<svg class="abs" style="left:387px;top:1012px" width="8" height="10" viewBox="0 0 8 10"><path d="M1.6 0.7l4.2 4.2-4.2 4.2" stroke="#A8ADBD" stroke-width="1.15" fill="none"/></svg>
<svg class="abs" style="left:458px;top:1012px" width="8" height="10" viewBox="0 0 8 10"><path d="M1.6 0.7l4.2 4.2-4.2 4.2" stroke="#A8ADBD" stroke-width="1.15" fill="none"/></svg>
<div class="ic" style="left:473px;top:1009px"><svg width="16" height="16" viewBox="0 0 16 16"  fill="none"><circle cx="8" cy="8" r="6.5" fill="#253627" stroke="#5FB865"/><path d="M6.2 4.9h3.6M6.2 11.1h3.6M8 4.9v6.2" stroke="#52A35A" stroke-width="1.3"/></svg></div>
<div class="tt" style="left:1692px;top:1007px;line-height:20px;font-size:12.3px;color:#A8ADBD">8:2</div>
<div class="tt" style="left:1725px;top:1007px;line-height:20px;font-size:12.3px;color:#A8ADBD">CRLF</div>
<div class="tt" style="left:1769px;top:1007px;line-height:20px;font-size:12.3px;color:#A8ADBD">UTF-8</div>
<div class="tt" style="left:1823px;top:1007px;line-height:20px;font-size:12.3px;color:#A8ADBD">4 个空格</div>
<div class="abs" style="left:1880px;top:1003px;width:40px;height:0px"></div>
<svg class="abs" style="left:1887px;top:1008px" width="16" height="16" viewBox="0 0 16 16"><rect x="1.7" y="7.2" width="10.5" height="7.3" rx="1" stroke="#CED0D6" stroke-width="1.2" fill="none"/><path d="M9.5 7.2V4.5a2.5 2.5 0 0 1 5 0v1" stroke="#CED0D6" stroke-width="1.2" fill="none"/><rect x="6.2" y="10.2" width="1.6" height="1.6" fill="#CED0D6"/></svg>

</body></html>
